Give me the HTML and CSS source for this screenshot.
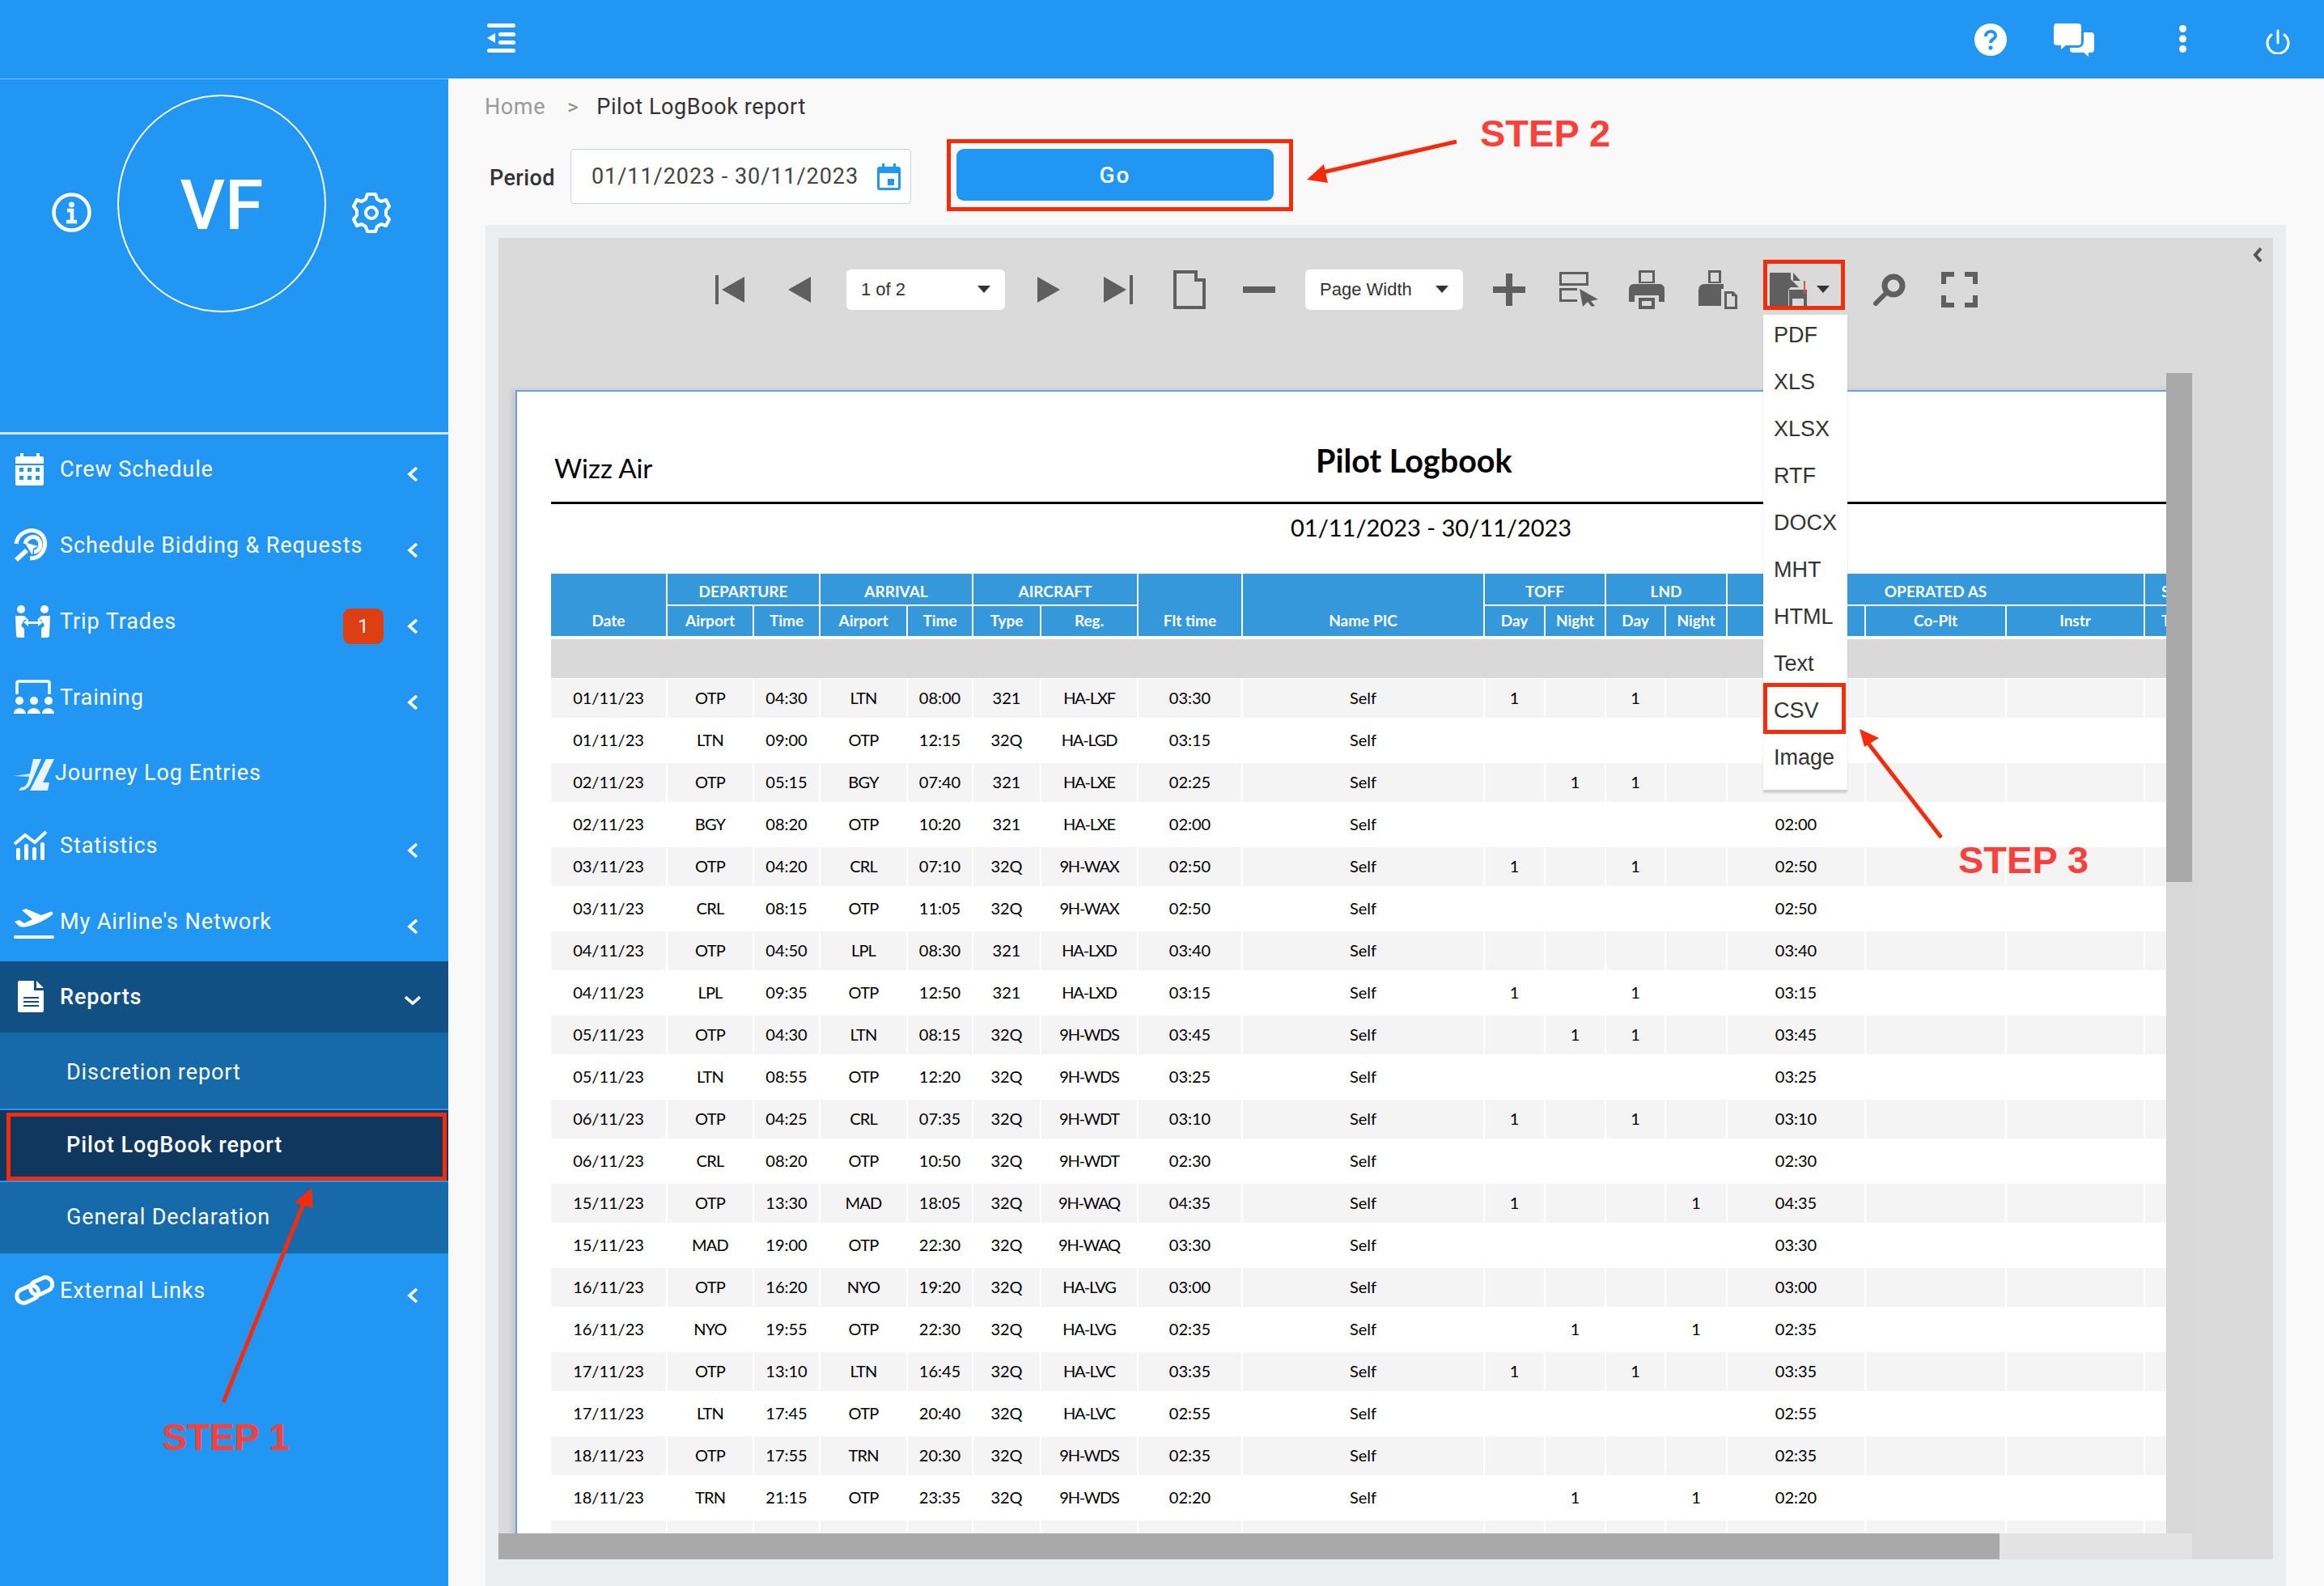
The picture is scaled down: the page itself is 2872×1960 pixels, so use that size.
FILE: index.html
```html
<!DOCTYPE html>
<html lang="en">
<head>
    <meta charset="UTF-8">
    <title>Pilot LogBook report</title>
    <link rel="stylesheet" href="styles.css">
</head>
<body>
    <svg class="defs" width="0" height="0">
        <symbol id="chev" viewBox="0 0 14 20"><path d="M12 2 3 10l9 8" fill="none" stroke="#fff" stroke-width="3.6"/></symbol>
        <symbol id="caret" viewBox="0 0 16 9"><path d="M0 0h16L8 9z" fill="#333"/></symbol>
    </svg>

    <header class="topbar">
        <svg class="menu-icon" width="35" height="36" viewBox="0 0 35 36" fill="#fff">
            <rect width="35" height="5" rx="2.5"/><rect x="14" y="11" width="21" height="5" rx="2.5"/><rect x="14" y="21" width="21" height="5" rx="2.5"/><rect y="31" width="35" height="5" rx="2.5"/><path d="M10 12v12L0 18z"/>
        </svg>
        <div class="top-icons">
            <svg class="help-icon" width="40" height="40" viewBox="0 0 40 40">
                <circle cx="20" cy="20" r="20" fill="#fff"/>
                <path d="M14 16c0-8 12-8 12-1 0 5-6 4-6 9" fill="none" stroke="#2196f3" stroke-width="4"/>
                <circle cx="20" cy="30" r="2.6" fill="#2196f3"/>
            </svg>
            <svg class="chat-icon" width="50" height="41" viewBox="0 0 50 41" fill="#fff">
                <path d="M4 0h26a4 4 0 0 1 4 4v19a4 4 0 0 1-4 4H15l-6 5v-5H4a4 4 0 0 1-4-4V4a4 4 0 0 1 4-4z"/>
                <path d="M37 11h9a4 4 0 0 1 4 4v17a4 4 0 0 1-4 4h-3v5l-6-5H24a4 4 0 0 1-4-4v-2h10a7 7 0 0 0 7-7z"/>
            </svg>
            <svg class="dots-icon" width="9" height="34" viewBox="0 0 9 34" fill="#fff">
                <circle cx="4.5" cy="4.5" r="4.5"/><circle cx="4.5" cy="17" r="4.5"/><circle cx="4.5" cy="29.5" r="4.5"/>
            </svg>
            <svg class="power-icon" width="30" height="31" viewBox="0 0 30 31" fill="none" stroke="#fff" stroke-width="3" stroke-linecap="round">
                <path d="M15 2v15M7 7a13 13 0 1 0 16 0"/>
            </svg>
        </div>
    </header>

    <div class="layout">
        <aside class="sidebar">
            <div class="profile">
                <svg class="info-icon" width="49" height="49" viewBox="0 0 49 49" fill="none" stroke="#fff">
                    <circle cx="24.5" cy="24.5" r="22" stroke-width="4.5"/>
                    <circle cx="24.5" cy="15" r="3.4" fill="#fff" stroke="none"/>
                    <path d="M19 22h6v14M18 36h13" stroke-width="4.5"/>
                </svg>
                <div class="avatar">VF</div>
                <svg class="gear-icon" width="48" height="50" viewBox="0 0 48 50" fill="none" stroke="#fff" stroke-width="4">
                    <circle cx="24" cy="25" r="7"/>
                    <path d="M19 2h10l2 6 5 3 6-2 4 8-4 5v6l4 5-4 8-6-2-5 3-2 6H19l-2-6-5-3-6 2-4-8 4-5v-6l-4-5 4-8 6 2 5-3z" stroke-linejoin="round"/>
                </svg>
            </div>

            <nav class="nav">
                <a class="nav-item">
                    <svg class="nav-icon" width="50" height="44" viewBox="0 0 50 44">
                        <path fill="#fff" d="M8 2h4v4h16V2h4v4h3a2 2 0 0 1 2 2v32a2 2 0 0 1-2 2H4a2 2 0 0 1-2-2V8a2 2 0 0 1 2-2h4z"/>
                        <path fill="#2196f3" d="M2 15h35v2H2zM7 20h5v5H7zM17 20h5v5h-5zM27 20h5v5h-5zM7 30h5v5H7zM17 30h5v5h-5zM27 30h5v5h-5z"/>
                    </svg>
                    <span class="nav-label">Crew Schedule</span>
                    <svg class="chev"><use href="#chev"/></svg>
                </a>
                <a class="nav-item">
                    <svg class="nav-icon" width="50" height="44" viewBox="0 0 50 44" fill="none" stroke="#fff" stroke-width="5">
                        <path d="M3 20C5 6 21 0 31 6c9 5 10 18 3 26-3 4-8 6-14 6"/>
                        <path d="M14 20c2-8 10-10 15-7 5 4 5 11 1 15-1 1-3 2-5 2"/>
                        <path fill="#fff" stroke="none" d="M13 18l17 5-6 3-1 8zM1 38l13-12 4 4L5 42z"/>
                    </svg>
                    <span class="nav-label">Schedule Bidding &amp; Requests</span>
                    <svg class="chev"><use href="#chev"/></svg>
                </a>
                <a class="nav-item">
                    <svg class="nav-icon" width="50" height="44" viewBox="0 0 50 44" fill="#fff">
                        <circle cx="9" cy="7" r="5"/><circle cx="38" cy="7" r="5"/>
                        <path d="M2 15h11l5 5h-5l-4 7 4 4v11H6a3 3 0 0 1-3-3zM45 15H34l-5 5h5l4 7-4 4v11h7a3 3 0 0 0 3-3z"/>
                        <path d="M12 23l6-4v3h12v-3l6 4-6 5v-3H18v3z"/>
                    </svg>
                    <span class="nav-label">Trip Trades</span>
                    <span class="badge">1</span>
                    <svg class="chev"><use href="#chev"/></svg>
                </a>
                <a class="nav-item">
                    <svg class="nav-icon" width="50" height="44" viewBox="0 0 50 44" fill="#fff">
                        <path fill="none" stroke="#fff" stroke-width="3.5" d="M4 18V4a2 2 0 0 1 2-2h36a2 2 0 0 1 2 2v14M4 3"/>
                        <circle cx="7" cy="26" r="5"/><circle cx="25" cy="26" r="5"/><circle cx="43" cy="26" r="5"/>
                        <path d="M0 42c0-9 14-9 15 0zM17 42c0-9 15-9 16 0zM35 42c0-9 15-9 15 0z"/>
                    </svg>
                    <span class="nav-label">Training</span>
                    <svg class="chev"><use href="#chev"/></svg>
                </a>
                <a class="nav-item item-short">
                    <svg class="nav-icon logo-icon" width="50" height="40" viewBox="0 0 50 40" fill="#fff">
                        <path opacity=".75" d="M0 21l20-3v4z"/>
                        <path opacity=".9" d="M24 0h10L22 28c-3 8-8 11-16 11l3-4c5 0 7-3 9-8z"/>
                        <path opacity=".9" d="M40 0h10L36 29h8l-2 10H20z"/>
                    </svg>
                    <span class="nav-label">Journey Log Entries</span>
                </a>
                <a class="nav-item">
                    <svg class="nav-icon" width="50" height="44" viewBox="0 0 50 44" fill="#fff">
                        <path fill="none" stroke="#fff" stroke-width="4" d="M1 20 14 9l12 9L40 5"/>
                        <rect x="3" y="25" width="5" height="15" rx="2"/><rect x="13" y="20" width="5" height="20" rx="2"/><rect x="23" y="24" width="5" height="16" rx="2"/><rect x="33" y="18" width="5" height="22" rx="2"/>
                    </svg>
                    <span class="nav-label">Statistics</span>
                    <svg class="chev"><use href="#chev"/></svg>
                </a>
                <a class="nav-item item-last">
                    <svg class="nav-icon" width="50" height="44" viewBox="0 0 50 44" fill="#fff">
                        <path d="M1 22l6-2 6 4 10-5L10 8l5-2 19 8 11-4c3-1 5 2 2 4-8 6-20 12-30 14-5 1-9 1-11-1z"/>
                        <rect y="39" width="50" height="4" rx="2"/>
                    </svg>
                    <span class="nav-label">My Airline's Network</span>
                    <svg class="chev"><use href="#chev"/></svg>
                </a>
                <a class="nav-item item-open">
                    <svg class="nav-icon" width="50" height="40" viewBox="0 0 50 40">
                        <path fill="#fff" d="M7 0h18v12h12v25a2 2 0 0 1-2 2H7a2 2 0 0 1-2-2V2a2 2 0 0 1 2-2zM28 0l9 9h-9z"/>
                        <path fill="#125084" d="M12 20h19v2H12zM12 25h19v2H12zM12 30h19v2H12z"/>
                    </svg>
                    <span class="nav-label">Reports</span>
                    <svg class="chev-down" width="20" height="12" viewBox="0 0 20 12"><path d="M1 2l9 8 9-8" fill="none" stroke="#fff" stroke-width="3.6"/></svg>
                </a>
                <div class="subnav">
                    <a class="sub-item">Discretion report</a>
                    <a class="sub-item sub-active">Pilot LogBook report</a>
                    <a class="sub-item">General Declaration</a>
                </div>
                <a class="nav-item item-ext">
                    <svg class="nav-icon" width="50" height="44" viewBox="0 0 50 44" fill="none" stroke="#fff" stroke-width="5">
                        <rect x="3" y="18" width="28" height="17" rx="8.5" transform="rotate(-25 17 26)"/>
                        <rect x="20" y="8" width="28" height="17" rx="8.5" transform="rotate(-25 34 16)"/>
                    </svg>
                    <span class="nav-label">External Links</span>
                    <svg class="chev"><use href="#chev"/></svg>
                </a>
            </nav>
        </aside>

        <main class="content">
            <div class="crumbs">
                <span class="crumb-home">Home</span>
                <span class="crumb-sep">&gt;</span>
                <span class="crumb-cur">Pilot LogBook report</span>
            </div>
            <div class="filter">
                <label class="filter-label">Period</label>
                <div class="date-input">
                    <span>01/11/2023 - 30/11/2023</span>
                    <svg width="29" height="33" viewBox="0 0 29 33" fill="#2196f3">
                        <path d="M6 0h3v4h11V0h3v4h3a3 3 0 0 1 3 3v23a3 3 0 0 1-3 3H3a3 3 0 0 1-3-3V7a3 3 0 0 1 3-3h3z"/>
                        <path fill="#fff" d="M3 12h23v18H3z"/><path d="M13 19h8v8h-8z"/>
                    </svg>
                </div>
                <button class="go-btn">Go</button>
            </div>

            <section class="panel">
                <div class="viewer">
                    <svg class="collapse" width="14" height="20" viewBox="0 0 14 20"><path d="M11 2 4 10l7 8" fill="none" stroke="#555" stroke-width="4"/></svg>
                    <div class="toolbar">
                        <svg width="36" height="36" viewBox="0 0 36 36" fill="#5f5f5f"><rect width="4" height="36"/><path d="M8 18 36 2v32z"/></svg>
                        <svg class="tb-mid" width="28" height="32" viewBox="0 0 28 32" fill="#5f5f5f"><path d="M0 16 28 0v32z"/></svg>
                        <div class="tb-select sel-pages"><span>1 of 2</span><svg width="16" height="9"><use href="#caret"/></svg></div>
                        <svg class="tb-mid" width="28" height="32" viewBox="0 0 28 32" fill="#5f5f5f"><path d="M28 16 0 0v32z"/></svg>
                        <svg width="36" height="36" viewBox="0 0 36 36" fill="#5f5f5f"><rect x="32" width="4" height="36"/><path d="M28 18 0 2v32z"/></svg>
                        <svg width="40" height="48" viewBox="0 0 40 48" fill="none" stroke="#5f5f5f" stroke-width="4"><path d="M2 2h26v10h10v34H2z"/></svg>
                        <svg class="tb-mid" width="40" height="8" viewBox="0 0 40 8" fill="#5f5f5f"><rect width="40" height="8"/></svg>
                        <div class="tb-select sel-zoom"><span>Page Width</span><svg width="16" height="9"><use href="#caret"/></svg></div>
                        <svg class="tb-mid" width="40" height="40" viewBox="0 0 40 40" fill="#5f5f5f"><path d="M16 0h8v16h16v8H24v16h-8V24H0v-8h16z"/></svg>
                        <svg width="48" height="43" viewBox="0 0 48 43" fill="#5f5f5f">
                            <path d="M0 0h36v17H0zM3 3v11h30V3zM0 20h22v3H3v11h19v3H0z" fill-rule="evenodd"/>
                            <path d="M25 21l23 13-9 2 5 6-4 1-5-6-6 6z"/>
                        </svg>
                        <svg width="44" height="48" viewBox="0 0 44 48" fill="#5f5f5f">
                            <path d="M12 0h20v16H12zM15 3v11h14V3z" fill-rule="evenodd"/>
                            <path d="M6 17h32a6 6 0 0 1 6 6v16h-7v-8H7v8H0V23a6 6 0 0 1 6-6z"/>
                            <path d="M12 34h20v14H12zM16 38v6h12v-6z" fill-rule="evenodd"/>
                        </svg>
                        <svg width="48" height="48" viewBox="0 0 48 48" fill="#5f5f5f">
                            <path d="M12 0h16v16H12zM15 3v11h10V3z" fill-rule="evenodd"/>
                            <path d="M7 17h24v6h-3v21H0V24a7 7 0 0 1 7-7z"/>
                            <path d="M32 26h11l5 5v17H32zM35 29v16h10V32h-4v-3z" fill-rule="evenodd"/>
                        </svg>
                        <div class="export">
                            <svg width="48" height="42" viewBox="0 0 48 42">
                                <path fill="#5f5f5f" d="M0 0h26v8l10 10H26a6 6 0 0 0-3 5v19H0z"/>
                                <path fill="#5f5f5f" d="M29 0l9 10h-9z"/>
                                <path fill="#5f5f5f" d="M24 21h22v21h-4V32H28v10h-4z"/>
                                <path fill="#5f5f5f" d="M33 24h6v7h-6z"/>
                                <path fill="#f5503c" d="M42 10h2v16h-2z"/>
                            </svg>
                            <svg width="16" height="9"><use href="#caret"/></svg>
                            <ul class="export-menu">
                                <li>PDF</li><li>XLS</li><li>XLSX</li><li>RTF</li><li>DOCX</li><li>MHT</li><li>HTML</li><li>Text</li><li>CSV</li><li>Image</li>
                            </ul>
                        </div>
                        <svg width="40" height="40" viewBox="0 0 40 40" fill="none" stroke="#5f5f5f"><circle cx="25" cy="15" r="11" stroke-width="7"/><path d="M16 24 3 37" stroke-width="6" stroke-linecap="round"/></svg>
                        <svg width="45" height="44" viewBox="0 0 45 44" fill="none" stroke="#5f5f5f" stroke-width="6"><path d="M3 15V3h13M29 3h13v12M42 29v12H29M16 41H3V29"/></svg>
                    </div>

                    <div class="doc-view">
                        <div class="doc-body">
                            <div class="doc-scroll">
                                <div class="page">
                                    <div class="rep-head">
                                        <div class="rep-company">Wizz Air</div>
                                        <div class="rep-title">Pilot Logbook</div>
                                    </div>
                                    <div class="rep-period">01/11/2023 - 30/11/2023</div>
                                    <table class="log">
                                        <colgroup>
                                            <col class="c144"><col class="c107"><col class="c82"><col class="c108"><col class="c81"><col class="c84"><col class="c120"><col class="c129"><col class="c299"><col class="c75"><col class="c75"><col class="c74"><col class="c76"><col class="c171"><col class="c174"><col class="c171"><col class="c120">
                                        </colgroup>
                                        <thead>
                                            <tr>
                                                <th rowspan="2">Date</th><th colspan="2">DEPARTURE</th><th colspan="2">ARRIVAL</th><th colspan="2">AIRCRAFT</th><th rowspan="2">Flt time</th><th rowspan="2">Name PIC</th><th colspan="2">TOFF</th><th colspan="2">LND</th><th colspan="3">OPERATED AS</th><th class="cut">SIM</th>
                                            </tr>
                                            <tr>
                                                <th>Airport</th><th>Time</th><th>Airport</th><th>Time</th><th>Type</th><th>Reg.</th><th>Day</th><th>Night</th><th>Day</th><th>Night</th><th>PIC</th><th>Co-Plt</th><th>Instr</th><th class="cut">Time</th>
                                            </tr>
                                        </thead>
                                        <tbody>
                                            <tr class="gap"><td colspan="17"></td></tr>
                                            <tr class="band"><td colspan="17"></td></tr>
                                            <tr class="gap-thin"><td colspan="17"></td></tr>
                                            <tr class="odd"><td>01/11/23</td><td>OTP</td><td>04:30</td><td>LTN</td><td>08:00</td><td>321</td><td>HA-LXF</td><td>03:30</td><td>Self</td><td>1</td><td></td><td>1</td><td></td><td>03:30</td><td></td><td></td><td></td></tr>
                                            <tr class="even"><td>01/11/23</td><td>LTN</td><td>09:00</td><td>OTP</td><td>12:15</td><td>32Q</td><td>HA-LGD</td><td>03:15</td><td>Self</td><td></td><td></td><td></td><td></td><td>03:15</td><td></td><td></td><td></td></tr>
                                            <tr class="odd"><td>02/11/23</td><td>OTP</td><td>05:15</td><td>BGY</td><td>07:40</td><td>321</td><td>HA-LXE</td><td>02:25</td><td>Self</td><td></td><td>1</td><td>1</td><td></td><td>02:25</td><td></td><td></td><td></td></tr>
                                            <tr class="even"><td>02/11/23</td><td>BGY</td><td>08:20</td><td>OTP</td><td>10:20</td><td>321</td><td>HA-LXE</td><td>02:00</td><td>Self</td><td></td><td></td><td></td><td></td><td>02:00</td><td></td><td></td><td></td></tr>
                                            <tr class="odd"><td>03/11/23</td><td>OTP</td><td>04:20</td><td>CRL</td><td>07:10</td><td>32Q</td><td>9H-WAX</td><td>02:50</td><td>Self</td><td>1</td><td></td><td>1</td><td></td><td>02:50</td><td></td><td></td><td></td></tr>
                                            <tr class="even"><td>03/11/23</td><td>CRL</td><td>08:15</td><td>OTP</td><td>11:05</td><td>32Q</td><td>9H-WAX</td><td>02:50</td><td>Self</td><td></td><td></td><td></td><td></td><td>02:50</td><td></td><td></td><td></td></tr>
                                            <tr class="odd"><td>04/11/23</td><td>OTP</td><td>04:50</td><td>LPL</td><td>08:30</td><td>321</td><td>HA-LXD</td><td>03:40</td><td>Self</td><td></td><td></td><td></td><td></td><td>03:40</td><td></td><td></td><td></td></tr>
                                            <tr class="even"><td>04/11/23</td><td>LPL</td><td>09:35</td><td>OTP</td><td>12:50</td><td>321</td><td>HA-LXD</td><td>03:15</td><td>Self</td><td>1</td><td></td><td>1</td><td></td><td>03:15</td><td></td><td></td><td></td></tr>
                                            <tr class="odd"><td>05/11/23</td><td>OTP</td><td>04:30</td><td>LTN</td><td>08:15</td><td>32Q</td><td>9H-WDS</td><td>03:45</td><td>Self</td><td></td><td>1</td><td>1</td><td></td><td>03:45</td><td></td><td></td><td></td></tr>
                                            <tr class="even"><td>05/11/23</td><td>LTN</td><td>08:55</td><td>OTP</td><td>12:20</td><td>32Q</td><td>9H-WDS</td><td>03:25</td><td>Self</td><td></td><td></td><td></td><td></td><td>03:25</td><td></td><td></td><td></td></tr>
                                            <tr class="odd"><td>06/11/23</td><td>OTP</td><td>04:25</td><td>CRL</td><td>07:35</td><td>32Q</td><td>9H-WDT</td><td>03:10</td><td>Self</td><td>1</td><td></td><td>1</td><td></td><td>03:10</td><td></td><td></td><td></td></tr>
                                            <tr class="even"><td>06/11/23</td><td>CRL</td><td>08:20</td><td>OTP</td><td>10:50</td><td>32Q</td><td>9H-WDT</td><td>02:30</td><td>Self</td><td></td><td></td><td></td><td></td><td>02:30</td><td></td><td></td><td></td></tr>
                                            <tr class="odd"><td>15/11/23</td><td>OTP</td><td>13:30</td><td>MAD</td><td>18:05</td><td>32Q</td><td>9H-WAQ</td><td>04:35</td><td>Self</td><td>1</td><td></td><td></td><td>1</td><td>04:35</td><td></td><td></td><td></td></tr>
                                            <tr class="even"><td>15/11/23</td><td>MAD</td><td>19:00</td><td>OTP</td><td>22:30</td><td>32Q</td><td>9H-WAQ</td><td>03:30</td><td>Self</td><td></td><td></td><td></td><td></td><td>03:30</td><td></td><td></td><td></td></tr>
                                            <tr class="odd"><td>16/11/23</td><td>OTP</td><td>16:20</td><td>NYO</td><td>19:20</td><td>32Q</td><td>HA-LVG</td><td>03:00</td><td>Self</td><td></td><td></td><td></td><td></td><td>03:00</td><td></td><td></td><td></td></tr>
                                            <tr class="even"><td>16/11/23</td><td>NYO</td><td>19:55</td><td>OTP</td><td>22:30</td><td>32Q</td><td>HA-LVG</td><td>02:35</td><td>Self</td><td></td><td>1</td><td></td><td>1</td><td>02:35</td><td></td><td></td><td></td></tr>
                                            <tr class="odd"><td>17/11/23</td><td>OTP</td><td>13:10</td><td>LTN</td><td>16:45</td><td>32Q</td><td>HA-LVC</td><td>03:35</td><td>Self</td><td>1</td><td></td><td>1</td><td></td><td>03:35</td><td></td><td></td><td></td></tr>
                                            <tr class="even"><td>17/11/23</td><td>LTN</td><td>17:45</td><td>OTP</td><td>20:40</td><td>32Q</td><td>HA-LVC</td><td>02:55</td><td>Self</td><td></td><td></td><td></td><td></td><td>02:55</td><td></td><td></td><td></td></tr>
                                            <tr class="odd"><td>18/11/23</td><td>OTP</td><td>17:55</td><td>TRN</td><td>20:30</td><td>32Q</td><td>9H-WDS</td><td>02:35</td><td>Self</td><td></td><td></td><td></td><td></td><td>02:35</td><td></td><td></td><td></td></tr>
                                            <tr class="even"><td>18/11/23</td><td>TRN</td><td>21:15</td><td>OTP</td><td>23:35</td><td>32Q</td><td>9H-WDS</td><td>02:20</td><td>Self</td><td></td><td>1</td><td></td><td>1</td><td>02:20</td><td></td><td></td><td></td></tr>
                                            <tr class="odd"><td>19/11/23</td><td>OTP</td><td>04:30</td><td>LTN</td><td>08:00</td><td>321</td><td>HA-LXF</td><td>03:30</td><td>Self</td><td></td><td></td><td></td><td></td><td>03:30</td><td></td><td></td><td></td></tr>
                                        </tbody>
                                    </table>
                                </div>
                            </div>
                            <div class="vscroll"><div class="vthumb"></div></div>
                        </div>
                        <div class="hscroll"><div class="hthumb"></div></div>
                    </div>
                </div>
            </section>
        </main>
    </div>

    <!-- red tutorial marks drawn over the screenshot -->
    <div class="mark mark-pilot"></div>
    <div class="mark mark-go"></div>
    <div class="mark mark-export"></div>
    <div class="mark mark-csv"></div>
    <div class="step step-1">STEP 1</div>
    <div class="step step-2">STEP 2</div>
    <div class="step step-3">STEP 3</div>
    <svg class="arrows" width="2872" height="1960" viewBox="0 0 2872 1960" fill="#f62b0c" stroke="#f62b0c">
        <path d="M276 1733 376 1485" fill="none" stroke-width="5"/>
        <path d="M385 1468 364 1486 387 1493z" stroke="none"/>
        <path d="M1800 175 1630 214" fill="none" stroke-width="5"/>
        <path d="M1615 222 1636 203 1641 226z" stroke="none"/>
        <path d="M2399 1035 2306 915" fill="none" stroke-width="5"/>
        <path d="M2298 901 2322 912 2304 923z" stroke="none"/>
    </svg>
</body>
</html>
```

FILE: styles.css
```css
* {
    box-sizing: border-box;
}
html, body {
    margin: 0;
    padding: 0;
}
body {
    position: relative;
    width: 2872px;
    height: 1960px;
    overflow: hidden;
    font-family: Roboto, sans-serif;
    background: #f9f9f9;
    color: #333;
}
.defs {
    position: absolute;
}

/* top bar */
.topbar {
    display: flex;
    align-items: center;
    height: 97px;
    padding-left: 602px;
    background: #2196f3;
}
.menu-icon {
    margin-top: -4px;
}
.top-icons {
    display: grid;
    grid-template-columns: 98px 155px 107px 30px;
    margin-left: auto;
    margin-right: 42px;
    align-items: start;
    height: 97px;
}
.help-icon, .chat-icon {
    margin-top: 29px;
}
.dots-icon {
    margin-top: 31px;
}
.power-icon {
    margin-top: 36px;
}

.layout {
    display: flex;
    height: 1863px;
}

/* sidebar */
.sidebar {
    width: 554px;
    flex: none;
    background: #2196f3;
    color: #fff;
    letter-spacing: .9px;
}
.profile {
    display: flex;
    align-items: flex-start;
    gap: 32px;
    height: 440px;
    padding: 19px 0 0 64px;
    border-top: 1px solid #7fc2f8;
    border-bottom: 3px solid #d5e6f5;
}
.info-icon, .gear-icon {
    margin-top: 121px;
}
.avatar {
    display: flex;
    align-items: center;
    justify-content: center;
    width: 258px;
    height: 269px;
    padding-top: 3px;
    border: 2px solid #fff;
    border-radius: 50%;
    font-size: 86px;
    font-weight: 500;
    letter-spacing: 0;
}
.nav-item {
    display: flex;
    align-items: center;
    height: 94px;
    padding: 0 37px 8px 17px;
    font-size: 27px;
}
.item-short {
    height: 89px;
    padding-bottom: 6px;
}
.item-last {
    height: 92px;
    padding-bottom: 6px;
}
.item-ext {
    padding-bottom: 6px;
}
.nav-icon {
    flex: none;
    margin-right: 7px;
}
.logo-icon {
    margin-right: 1px;
    margin-top: 6px;
}
.nav-label {
    flex: 1;
}
.chev {
    width: 14px;
    height: 20px;
    margin-top: 12px;
}
.chev-down {
    margin-top: 8px;
    margin-right: -3px;
}
.badge {
    width: 50px;
    height: 44px;
    margin: 12px 29px 0 0;
    border-radius: 9px;
    background: #dd3e12;
    font-size: 24px;
    line-height: 44px;
    text-align: center;
    letter-spacing: 0;
}
.item-open {
    height: 88px;
    padding-bottom: 0;
    background: #125084;
    font-weight: 500;
}
.subnav {
    display: flex;
    flex-direction: column;
    gap: 2px;
    height: 275px;
}
.sub-item {
    flex: none;
    display: flex;
    align-items: center;
    height: 88px;
    padding: 0 0 2px 82px;
    background: #166aaa;
    font-size: 27px;
}
.sub-item:first-child {
    height: 94px;
    padding: 3px 0 0 82px;
}
.sub-active {
    height: 87px;
    background: #10385e;
    font-weight: 500;
}

/* main area */
.content {
    flex: 1;
    min-width: 0;
}
.crumbs {
    display: flex;
    align-items: center;
    height: 70px;
    padding: 0 0 0 45px;
    font-size: 27px;
    letter-spacing: .6px;
}
.crumb-home {
    color: #9a9a9a;
}
.crumb-sep {
    margin: 0 22px 0 27px;
    color: #8d8d8d;
    font-size: 26px;
}
.filter {
    display: flex;
    align-items: center;
    height: 100px;
    margin-bottom: 11px;
    padding-left: 51px;
}
.filter-label {
    width: 100px;
    margin-top: 6px;
    font-size: 27px;
    font-weight: 500;
    color: #333;
    letter-spacing: .4px;
}
.date-input {
    display: flex;
    align-items: center;
    justify-content: space-between;
    width: 421px;
    height: 68px;
    margin-top: 2px;
    padding: 0 12px 0 25px;
    background: #fff;
    border: 1px solid #c6d2de;
    border-radius: 4px;
    font-size: 27px;
    letter-spacing: .95px;
    color: #444;
}
.go-btn {
    width: 392px;
    height: 64px;
    margin-top: -2px;
    margin-left: 56px;
    border: 0;
    border-radius: 9px;
    background: #2196f3;
    color: #fff;
    font-family: Roboto, sans-serif;
    font-size: 28px;
    font-weight: 500;
    letter-spacing: 2px;
}
.panel {
    height: 1682px;
    margin: 0 47px 0 46px;
    padding: 16px 16px 33px 16px;
    background: #ecedee;
}
.viewer {
    position: relative;
    height: 100%;
    background: #dadada;
}
.collapse {
    position: absolute;
    top: 11px;
    right: 12px;
}

/* report toolbar */
.toolbar {
    display: grid;
    grid-template-columns: 90px 72px 236px 82px 86px 86px 77px 232px 82px 86px 86px 80px 136px 84px 45px;
    grid-template-rows: 127px;
    align-items: center;
    justify-items: start;
    height: 167px;
    padding: 0 0 0 268px;
}
.tb-select {
    display: flex;
    align-items: center;
    justify-content: space-between;
    height: 50px;
    padding: 0 18px 0 18px;
    background: #fff;
    border-radius: 6px;
    font-family: "Liberation Sans", sans-serif;
    font-size: 22px;
    color: #333;
}
.sel-pages {
    width: 196px;
}
.sel-zoom {
    width: 195px;
}
.export {
    position: relative;
    display: flex;
    align-items: center;
    gap: 10px;
    width: 101px;
    height: 62px;
    padding-left: 8px;
}
.export-menu {
    position: absolute;
    z-index: 2;
    top: 62px;
    left: 0;
    width: 104px;
    margin: 0;
    padding: 0 0 7px;
    list-style: none;
    background: #fff;
    box-shadow: 0 4px 2px rgba(0, 0, 0, .15);
    font-family: "Liberation Sans", sans-serif;
    font-size: 27px;
    color: #333;
}
.export-menu li {
    height: 58px;
    padding-left: 13px;
    line-height: 51px;
}

/* report page */
.doc-view {
    width: 2093px;
}
.doc-body {
    display: flex;
    height: 1434px;
}
.doc-scroll {
    width: 2061px;
    padding: 21px 0 0 21px;
    overflow: hidden;
    background: #dadada;
}
.vscroll {
    width: 32px;
    background: #d8d8d8;
}
.vthumb {
    height: 629px;
    background: #a9a9a9;
}
.hscroll {
    height: 32px;
    background: #e4e3e3;
}
.hthumb {
    width: 1855px;
    height: 32px;
    background: #a9a9a9;
}
.page {
    width: 2140px;
    height: 1414px;
    padding-left: 42px;
    background: #fff;
    border-top: 2px solid #6a9fea;
    border-left: 2px solid #6a9fea;
    box-shadow: -4px 0 6px rgba(120, 130, 160, .25);
    font-family: Lato, sans-serif;
    color: #000;
}
.rep-head {
    display: flex;
    align-items: flex-end;
    width: 2100px;
    height: 139px;
    padding-left: 4px;
    border-bottom: 3px solid #000;
}
.rep-company {
    width: 941px;
    padding-bottom: 22px;
    font-size: 33px;
}
.rep-title {
    padding-bottom: 28px;
    font-size: 39.5px;
    font-weight: 700;
}
.rep-period {
    height: 86px;
    padding: 11px 0 0 914px;
    font-size: 29px;
}

.log {
    width: 2090px;
    table-layout: fixed;
    border-collapse: separate;
    border-spacing: 0;
    font-size: 20px;
    text-align: center;
}
.c144 { width: 144px; }
.c107 { width: 107px; }
.c108 { width: 108px; }
.c81 { width: 81px; }
.c82 { width: 82px; }
.c84 { width: 84px; }
.c120 { width: 120px; }
.c129 { width: 129px; }
.c299 { width: 299px; }
.c75 { width: 75px; }
.c74 { width: 74px; }
.c76 { width: 76px; }
.c171 { width: 171px; }
.c174 { width: 174px; }

.log th {
    height: 39px;
    padding: 6px 0 0 0;
    background: #3498db;
    color: #fff;
    font-size: 19px;
    font-weight: 700;
    line-height: 32px;
    vertical-align: bottom;
    border-right: 2px solid #fff;
    border-bottom: 2px solid #fff;
}
.log th[rowspan] {
    padding-bottom: 3px;
    border-bottom: 0;
}
.log thead tr:nth-child(2) th {
    height: 37px;
    padding: 0 0 3px;
    border-bottom: 0;
}
.log .cut {
    padding-left: 20px;
    text-align: left;
}
.log thead tr:nth-child(2) .cut {
    padding-left: 20px;
}
.log td {
    padding: 0 0 3px;
    border-right: 2px solid #fff;
}
.log td:nth-child(2), .log td:nth-child(4) {
    letter-spacing: -.8px;
}
.log td:nth-child(7) {
    letter-spacing: -1.2px;
}
.gap td {
    height: 4px;
    padding: 0;
    line-height: 0;
}
.gap-thin td {
    height: 1px;
    padding: 0;
    line-height: 0;
}
.band td {
    height: 48px;
    background: #d9d9d9;
}
.odd td {
    height: 48px;
    background: #f4f4f4;
}
.even td {
    height: 56px;
}

/* tutorial marks */
.mark {
    position: absolute;
    z-index: 3;
    border: 5px solid #f62b0c;
}
.mark-pilot {
    left: 8px;
    top: 1375px;
    width: 544px;
    height: 84px;
}
.mark-go {
    left: 1170px;
    top: 172px;
    width: 428px;
    height: 89px;
}
.mark-export {
    left: 2179px;
    top: 321px;
    width: 101px;
    height: 62px;
}
.mark-csv {
    left: 2179px;
    top: 844px;
    width: 102px;
    height: 63px;
}
.step {
    position: absolute;
    z-index: 3;
    font-family: "Liberation Sans", sans-serif;
    font-size: 47px;
    font-weight: 700;
    line-height: 50px;
    color: #f9403a;
}
.step-1 {
    left: 200px;
    top: 1751px;
    letter-spacing: -.6px;
}
.step-2 {
    left: 1829px;
    top: 140px;
}
.step-3 {
    left: 2420px;
    top: 1038px;
}
.arrows {
    position: absolute;
    z-index: 3;
    left: 0;
    top: 0;
}
```
